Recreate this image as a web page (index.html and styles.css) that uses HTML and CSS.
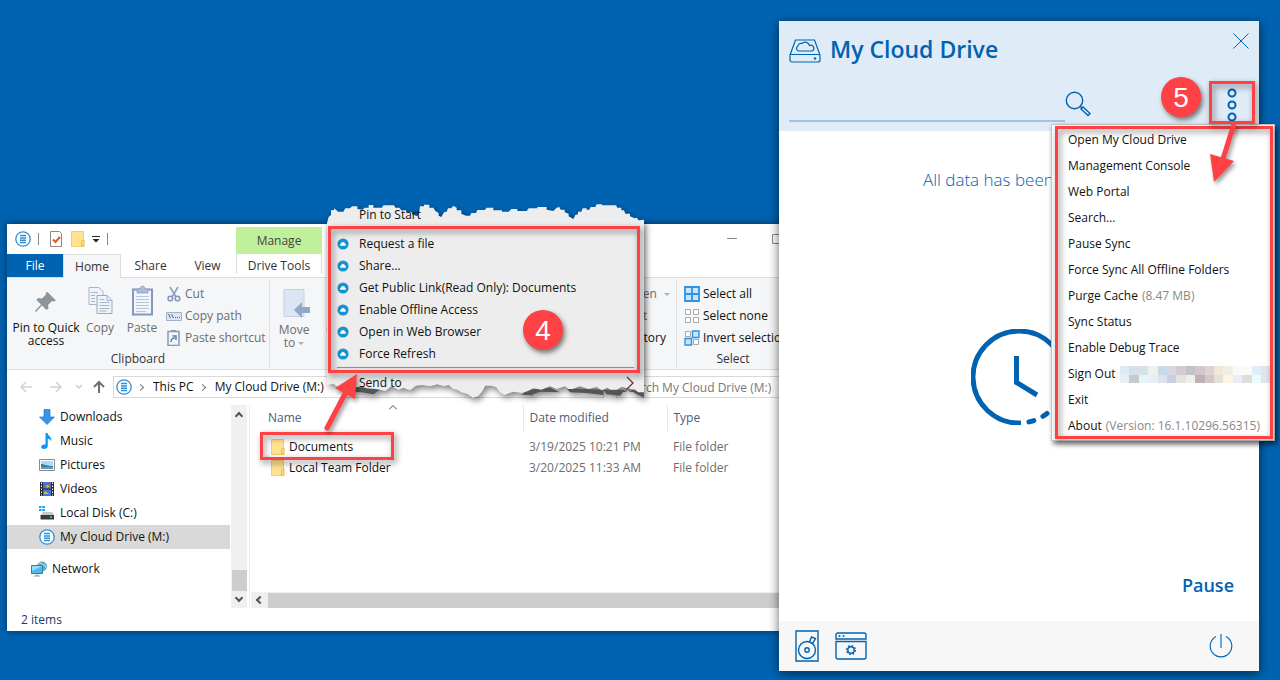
FILE: index.html
```
<!DOCTYPE html>
<html lang="en">
<head>
  <meta charset="UTF-8" />
  <meta name="viewport" content="width=device-width, initial-scale=1.0" />
  <title>My Cloud Drive</title>
  <link rel="stylesheet" href="styles.css">
</head>
<body>
  <!-- shared icons -->
  <svg class="sprites" width="0" height="0">
    <symbol id="i-drive" viewBox="0 0 16 16">
      <circle cx="8" cy="8" r="7.2" fill="#fff" stroke="#2b8fdc" stroke-width="1.3"/>
      <path d="M5 4.5h6M5 6.9h6M5 9.3h6M5 11.6h6" stroke="#2b8fdc" stroke-width="1.5"/>
    </symbol>
    <symbol id="i-cloud" viewBox="0 0 12 12">
      <circle cx="6" cy="6" r="5.6" fill="#1593d2"/>
      <path d="M3.600 7.800a1.200 1.200 0 0 1 .2-2.100 2.300 2.300 0 0 1 4.400 0 1.200 1.200 0 0 1 .2 2.100z" fill="#fff"/>
    </symbol>
    <symbol id="i-folder" viewBox="0 0 14 16">
      <path d="M.5.5h12v15H.5z" fill="#ffe391" stroke="#f0cf69"/>
      <path d="M10.5 15.5v-5l1-1.5h1.5v6.5z" fill="#ffdc77" stroke="#e8bd45"/>
    </symbol>
  </svg>

  <main class="desktop">
    <section class="explorer">
      <div class="title-bar">
        <svg class="i16"><use href="#i-drive"/></svg>
        <span class="divider"></span>
        <svg class="i16" viewBox="0 0 16 16"><path d="M2.500.5h9l2 2v13h-11z" fill="#fff" stroke="#8a8a8a"/><path d="M5 8.500l2.500 2.500L12 6" fill="none" stroke="#e8531f" stroke-width="2"/></svg>
        <svg class="i16 folder"><use href="#i-folder"/></svg>
        <svg class="more" viewBox="0 0 8 8"><path d="M0 1.500h8" stroke="#222"/><path d="M.5 4h7L4 7.500z" fill="#222"/></svg>
        <span class="divider"></span>
        <span class="manage">Manage</span>
        <svg class="win-controls" viewBox="0 0 60 14"><path d="M0 6.500h10M45.500 2.500h9v9h-9z" fill="none" stroke="#888"/></svg>
      </div>
      <nav class="tabs">
        <button class="tab file">File</button>
        <button class="tab active">Home</button>
        <button class="tab">Share</button>
        <button class="tab">View</button>
        <button class="tab tools">Drive Tools</button>
      </nav>

      <div class="ribbon">
        <div class="group clipboard">
          <div class="tools-row">
            <button class="big pin">
              <svg viewBox="0 0 32 32"><path d="M17.500 7l8.500 8.500-2.500 1-1.500-.5-4 4 .5 3.500-2 1.500-4.500-4.500L6 27l-1-1 6-6.500-4.500-4.500L8 13l4 .5 4-4-.5-1.500z" fill="#8c959c"/></svg>
              <span>Pin to Quick<br>access</span>
            </button>
            <button class="big dim">
              <svg viewBox="0 0 32 32"><path d="M5 2.500h10l4 4v13H5z" fill="#eff3fa" stroke="#a6b5cd"/><path d="M13 10.500h10l5 5v13H13z" fill="#eff3fa" stroke="#98a9c6"/><path d="M23 10.500v5h5M7 7.500h7M7 10.500h4M7 13.500h4M7 16.500h4M15.500 17.500h10M15.500 20.500h10M15.500 23.500h10M15.500 26h7M15.500 14.500h5" fill="none" stroke="#a6b5cd"/></svg>
              Copy
            </button>
            <button class="big dim">
              <svg viewBox="0 0 32 32"><path d="M7 4.500h19v25H7z" fill="#f2f5fb" stroke="#8499bd" stroke-width="2"/><path d="M11 4h3c0-4 5-4 5 0h3v4H11z" fill="#aebdd4" stroke="#8499bd" stroke-width=".7"/><path d="M10 11.500h13M10 14.500h13M10 17.500h13M10 20.500h13M10 23.500h13M10 26.500h10" stroke="#b9c5d9"/></svg>
              Paste
            </button>
            <ul class="small-tools dim">
              <li><button><svg class="i16" viewBox="0 0 16 16"><path d="M4 1l6 10M12 1L6 11" stroke="#909fb7" stroke-width="1.600" fill="none"/><circle cx="4.300" cy="12.500" r="2.300" fill="none" stroke="#8095bd" stroke-width="1.500"/><circle cx="11.500" cy="12.500" r="2.300" fill="none" stroke="#8095bd" stroke-width="1.500"/></svg>Cut</button></li>
              <li><button><svg class="i16" viewBox="0 0 16 16"><path d="M.5 4.500h15v8H.5z" fill="#dce4f2" stroke="#a2b2cc"/><path d="M2.500 6l2 4M5.500 6l2 4M9 9.500h1M11 9.500h1M13 9.500h1" stroke="#50658c"/></svg>Copy path</button></li>
              <li><button><svg class="i16" viewBox="0 0 16 16"><path d="M2 1.500h11v14H2z" fill="#f2f5fb" stroke="#8499bd" stroke-width="1.500"/><path d="M5 1h5" stroke="#8499bd" stroke-width="2"/><path d="M5 12c0-3 1-4 4-4M6.500 6H10v4" fill="none" stroke="#687fa9" stroke-width="1.500"/></svg>Paste shortcut</button></li>
            </ul>
          </div>
          <p class="group-name">Clipboard</p>
        </div>
        <div class="group organize">
          <div class="tools-row">
            <button class="big dim">
              <svg viewBox="0 0 32 32"><path d="M6 2.500h20v27H6z" fill="#dbe5f4" stroke="#c4d1e5"/><path d="M16 23l8-8v5h8v6h-8v5z" fill="#93a7c9"/></svg>
              Move to <i class="arrow"></i>
            </button>
            <button class="big dim">
              <svg viewBox="0 0 32 32"><path d="M6 2.500h20v27H6z" fill="#dbe5f4" stroke="#c4d1e5"/></svg>
              Copy to
            </button>
          </div>
        </div>
        <div class="group open">
          <ul class="small-tools">
            <li class="dim"><button>Open <i class="arrow"></i></button></li>
            <li class="dim"><button>Edit</button></li>
            <li><button>History</button></li>
          </ul>
        </div>
        <div class="group select">
          <ul class="small-tools">
            <li><button><svg class="i16" viewBox="0 0 16 16"><path d="M1 1h14v14H1zM8 1v14M1 8h14" fill="#c5e5fc" stroke="#2d93e4" stroke-width="1.800"/></svg>Select all</button></li>
            <li><button><svg class="i16" viewBox="0 0 16 16"><path d="M1.500 1.500h5v5h-5zM9.500 1.500h5v5h-5zM1.500 9.500h5v5h-5zM9.500 9.500h5v5h-5z" fill="#fff" stroke="#a8a8a8"/></svg>Select none</button></li>
            <li><button><svg class="i16" viewBox="0 0 16 16"><path d="M1.500 1.500h5v5h-5zM9.500 9.500h5v5h-5z" fill="#fff" stroke="#a8a8a8"/><path d="M8.500 1h6.500v6.500H8.500zM1 8.500h6.500V15H1z" fill="#c5e5fc" stroke="#2d93e4" stroke-width="1.400"/></svg>Invert selection</button></li>
          </ul>
          <p class="group-name">Select</p>
        </div>
      </div>

      <div class="address-row">
        <svg class="nav-arrows" viewBox="0 0 92 16"><g fill="none" stroke-width="1.500"><path d="M13 8H2M7 3L2 8l5 5M31 8h11M37 3l5 5-5 5" stroke="#d3d3d3"/><path d="M57 6l3 3 3-3" stroke="#ccc"/><path d="M80 14V3M75 8l5-5 5 5" stroke="#707070" stroke-width="2"/></g></svg>
        <div class="address">
          <svg class="i16"><use href="#i-drive"/></svg>
          <span class="chev"></span><a href="#">This PC</a>
          <span class="chev"></span><a href="#">My Cloud Drive (M:)</a>
        </div>
        <input class="search" type="text" aria-label="Search My Cloud Drive" placeholder="Search My Cloud Drive (M:)">
      </div>

      <div class="panes">
        <ul class="tree">
          <li><svg class="i16" viewBox="0 0 16 16"><path d="M5 .5h6V8h4.500L8 15.500.5 8H5z" fill="#3596e9" stroke="#2475bf" stroke-width=".7"/></svg>Downloads</li>
          <li><svg class="i16" viewBox="0 0 16 16"><path d="M6.500 0h2c.5 3 4.500 3.500 3.800 8.500-.7-2-2-2.800-3.500-2.800V13c0 2-1.800 3-3.600 3C1 16 1.500 11.500 5 11.500h1.500z" fill="#0b98f5"/></svg>Music</li>
          <li><svg class="i16" viewBox="0 0 16 16"><path d="M.5 2.500h15v11H.5z" fill="#fff" stroke="#8a8a8a"/><path d="M2 4h12v8H2z" fill="#a9dcf7"/><path d="M2 7c4 0 5 2 12 2v3H2z" fill="#477e8e"/><path d="M2 10h12v2H2z" fill="#5b9fc8"/></svg>Pictures</li>
          <li><svg class="i16" viewBox="0 0 16 16"><path d="M1 1h14v14H1z" fill="#2b2b2b"/><path d="M4 1h8v6.500H4z" fill="#4a73d1"/><path d="M4 8.500h8V15H4z" fill="#4a73d1"/><path d="M7 4l4 1-3 2zM6 10l4 3H5z" fill="#efc01e"/><path d="M8 3h3v1H8zM8 10h3v1H8z" fill="#d54a22"/><path d="M2.500 1.500v13M13.500 1.500v13" stroke="#fff" stroke-dasharray="1.500 1.500"/></svg>Videos</li>
          <li><svg class="i16" viewBox="0 0 16 16"><path d="M0 1h2.500v2H0zM3.300 1H6v2H3.300zM0 4h2.500v2H0zM3.300 4H6v2H3.300z" fill="#14a7ec"/><path d="M4 7h9l2 3H2z" fill="#c9c9c9"/><path d="M1.500 10h13.500v4.500H1.500z" fill="#3c3c3c"/><path d="M11 12h2" stroke="#50e04b" stroke-width="1.500"/></svg>Local Disk (C:)</li>
          <li class="current"><svg class="i16"><use href="#i-drive"/></svg>My Cloud Drive (M:)</li>
          <li class="network"><svg class="i16" viewBox="0 0 16 16"><circle cx="11" cy="5.500" r="5" fill="#6ba8c2"/><path d="M8 2c3 0 3 2 5 2s1 3 2.500 3" stroke="#c9e4ea" fill="none"/><path d="M.5 4.500h11v8H.5z" fill="#51b9ee" stroke="#2b7fb0"/><path d="M1 5h10L1 10z" fill="#9addfa"/><path d="M3 15h6M6 13v2" stroke="#8398a5"/></svg>Network</li>
        </ul>
        <div class="v-scroll"><i class="up"></i><b></b><i class="down"></i></div>
        <div class="files">
          <table>
            <thead>
              <tr><th class="name">Name<svg class="sort" viewBox="0 0 8 5"><path d="M0 4.500L4 .5l4 4" fill="none" stroke="#555"/></svg></th><th class="date">Date modified</th><th>Type</th></tr>
            </thead>
            <tbody>
              <tr><td><svg class="i16 folder"><use href="#i-folder"/></svg>Documents</td><td>3/19/2025 10:21 PM</td><td>File folder</td></tr>
              <tr><td><svg class="i16 folder"><use href="#i-folder"/></svg>Local Team Folder</td><td>3/20/2025 11:33 AM</td><td>File folder</td></tr>
            </tbody>
          </table>
          <div class="h-scroll"><i></i><b></b></div>
        </div>
      </div>
      <footer class="status">2 items</footer>

      <!-- torn context menu -->
      <div class="context">
        <svg class="paper" viewBox="21 24 951 600">
          <path d="M95 574L180 584 160 598 125 592 105 590zM530 568L620 578 640 604 600 588 560 584zM605 600L625 584 690 578 720 592 660 590 640 598zM740 580L850 584 850 600 800 594 750 592zM850 584L915 584 900 602 860 598zM930 584L972 580V608L950 598z" fill="#555"/>
          <path d="M21 84L26 66 33 60V46L42 45V40L55 50H70L76 40H90L96 34H112V42L128 44 134 38H146V30H160V38H186L190 31H222L226 38H238L244 46H258V52H276V58L292 64 298 48 300 34H312V29H328V38H340L346 48 356 54V62L364 66 372 52 380 50 384 40H394L400 32 410 38V46H424V56L438 62H450L454 54H468L472 45H494L500 38H520V46H546V50H566L574 42H592V48H620L626 40H652V36H680V44L700 48 710 38 718 36 722 44H734V52L746 56V64L760 72 766 60 774 58V50H784L788 40H800V44H808L812 36H826L830 28H846V31H888L892 38H904V46H912L916 56H930V64L944 70 950 68 956 76 972 74V592L955 592 945 584 920 580 905 576 890 584H872L862 578 845 586 830 576 806 582 780 574 758 582H745L735 574 710 582 690 574 664 584 640 580 624 588 606 594 580 590 552 600 540 592 528 576 512 572 496 572 486 590 474 604 458 608 444 598 424 592 412 584 400 582 386 570 372 574 352 568 330 574 306 570 288 572 270 586 250 578 236 584 214 574 196 588 170 582 140 580 126 574 100 578 80 570 56 578 40 566 21 570z" fill="#ededed"/>
        </svg>
        <ul>
          <li class="last-line">Pin to Start</li>
          <li><svg class="i12"><use href="#i-cloud"/></svg>Request a file</li>
          <li><svg class="i12"><use href="#i-cloud"/></svg>Share...</li>
          <li><svg class="i12"><use href="#i-cloud"/></svg>Get Public Link(Read Only): Documents</li>
          <li><svg class="i12"><use href="#i-cloud"/></svg>Enable Offline Access</li>
          <li><svg class="i12"><use href="#i-cloud"/></svg>Open in Web Browser</li>
          <li class="last-line"><svg class="i12"><use href="#i-cloud"/></svg>Force Refresh</li>
          <li>Send to<svg class="submenu" viewBox="0 0 8 14"><path d="M1 1l6 6-6 6" fill="none" stroke="#6b3535" stroke-width="1.300"/></svg></li>
        </ul>
        <div class="mark mark-context"></div>
        <span class="badge badge-4">4</span>
      </div>
      <div class="mark mark-file"></div>
      <svg class="pointer pointer-file" viewBox="0 0 44 64"><path d="M7 56L27 18" stroke="#fd4144" stroke-width="5" stroke-linecap="round"/><path d="M37 2L15 16l20 11z" fill="#fd4144"/></svg>
    </section>

    <section class="cloud">
      <header>
        <div class="brand">
          <svg viewBox="0 0 32 24"><g fill="none" stroke="#0063b1" stroke-width="1.200"><path d="M1 16L6.500 1h19L31 16v5a2 2 0 0 1-2 2H3a2 2 0 0 1-2-2zM1 15.500h30"/><path d="M9.500 12a2.700 2.700 0 0 1-.5-5 3 3 0 0 1 4-2.500 4.500 4.500 0 0 1 7.500 2 3 3 0 0 1 2.500 5.500z"/></g><circle cx="26" cy="19.500" r="1.200" fill="#0063b1"/></svg>
          <h1>My Cloud Drive</h1>
          <button class="close" aria-label="Close"><svg viewBox="0 0 16 16"><path d="M.5.5l15 15M15.500.5l-15 15" stroke="#0063b1"/></svg></button>
        </div>
        <div class="find">
          <input type="text" aria-label="Search">
          <button aria-label="Search"><svg viewBox="0 0 26 26"><g fill="none" stroke="#0063b1" stroke-width="1.400"><circle cx="9.500" cy="9.500" r="8.200"/><path d="M15 15l2 2"/><path d="M16 18l2-2 7 6.500-2 2z"/></g></svg></button>
          <button class="dots" aria-label="Menu"><svg viewBox="0 0 12 34"><g fill="none" stroke="#0063b1" stroke-width="2"><circle cx="6" cy="5" r="3.500"/><circle cx="6" cy="17" r="3.500"/><circle cx="6" cy="29" r="3.500"/></g></svg></button>
        </div>
      </header>
      <div class="state">
        <p>All data has been</p>
        <svg class="clock" viewBox="0 0 96 96"><g fill="none" stroke="#0063b1" stroke-width="5"><path d="M50 94A46 46 0 1 1 94 48"/><path d="M58 92.900A46 46 0 0 0 94 48" stroke-linecap="round" stroke-dasharray="5 10"/><path d="M45.500 27v26.500L66 66"/></g></svg>
        <button class="pause">Pause</button>
      </div>
      <footer>
        <button aria-label="Drive"><svg viewBox="0 0 24 32"><g fill="none" stroke="#0063b1" stroke-width="1.400"><path d="M1 1h22v30H1z"/><circle cx="12" cy="20" r="8.500"/><circle cx="12" cy="20" r="2.200"/><path d="M14.500 12l2-5 4 1.500-3 5z" fill="#f7f7f7"/></g></svg></button>
        <button aria-label="Settings"><svg class="wide" viewBox="0 0 32 28"><g fill="none" stroke="#0063b1" stroke-width="1.400"><path d="M1 7V3a2 2 0 0 1 2-2h26a2 2 0 0 1 2 2v4zM1 9.500h30V25a2 2 0 0 1-2 2H3a2 2 0 0 1-2-2z"/><circle cx="16" cy="18" r="3.200"/><circle cx="16" cy="18" r="4.400" stroke-dasharray="1.700 1.750"/></g><circle cx="4.500" cy="4" r="1" fill="#0063b1"/><circle cx="8.500" cy="4" r="1" fill="#0063b1"/></svg></button>
        <button class="power" aria-label="Power"><svg viewBox="0 0 24 24"><path d="M7 2.500a10.800 10.800 0 1 0 10 0M12 0v14" fill="none" stroke="#0063b1" stroke-width="1.100"/></svg></button>
      </footer>

      <div class="menu">
        <button>Open My Cloud Drive</button>
        <button>Management Console</button>
        <button>Web Portal</button>
        <button>Search...</button>
        <button>Pause Sync</button>
        <button>Force Sync All Offline Folders</button>
        <button>Purge Cache <small>(8.47 MB)</small></button>
        <button>Sync Status</button>
        <button>Enable Debug Trace</button>
        <button class="account">Sign Out
          <svg class="masked" viewBox="0 0 16 2" preserveAspectRatio="none" shape-rendering="crispEdges">
            <path d="M0 0h1v1H0zM13 1h1v1h-1z" fill="#dcebf4"/><path d="M1 0h2v1H1z" fill="#d5e0e8"/><path d="M3 0h1v1H3z" fill="#edf2ed"/><path d="M4 0h1v1H4z" fill="#c9d9ea"/><path d="M5 0h1v1H5z" fill="#d6d7e1"/><path d="M6 0h1v1H6z" fill="#d4cbd0"/><path d="M7 0h1v1H7z" fill="#c5c1cb"/><path d="M8 0h1v1H8zM9 1h1v1H9z" fill="#d4c6c9"/><path d="M9 0h1v1H9z" fill="#dfd2d4"/><path d="M10 0h1v1h-1z" fill="#f2e6d8"/><path d="M11 0h1v1h-1z" fill="#f1eee4"/><path d="M12 0h2v1h-2z" fill="#fafaf7"/><path d="M14 0h1v1h-1z" fill="#dfeefa"/><path d="M15 0h1v2h-1z" fill="#e2e5ee"/>
            <path d="M0 1h1v1H0zM3 1h1v1H3zM12 1h1v1h-1z" fill="#e8edf6"/><path d="M1 1h1v1H1z" fill="#c6cbce"/><path d="M2 1h1v1H2z" fill="#e7f4fa"/><path d="M4 1h1v1H4z" fill="#dee3ef"/><path d="M5 1h1v1H5z" fill="#cccfe2"/><path d="M6 1h1v1H6z" fill="#e5e2e4"/><path d="M7 1h1v1H7z" fill="#eff0eb"/><path d="M8 1h1v1H8z" fill="#bdb3b6"/><path d="M10 1h1v1h-1z" fill="#e7dfda"/><path d="M11 1h1v1h-1z" fill="#fcf4e7"/><path d="M13 1h1v1h-1z" fill="#dddfda"/><path d="M14 1h1v1h-1z" fill="#effaff"/>
          </svg>
        </button>
        <button>Exit</button>
        <button>About <small>(Version: 16.1.10296.56315)</small></button>
        <div class="mark mark-menu"></div>
      </div>
      <div class="mark mark-dots"></div>
      <span class="badge badge-5">5</span>
      <svg class="pointer pointer-menu" viewBox="0 0 40 70"><path d="M28 4L16 42" stroke="#fd4144" stroke-width="5"/><path d="M8 62L4 34l24 7z" fill="#fd4144"/></svg>
    </section>
  </main>
</body>
</html>
```
FILE: styles.css
```
* {
  box-sizing: border-box;
}
body {
  margin: 0;
  font-family: "Open Sans", "Noto Sans", sans-serif;
  font-size: 12px;
  line-height: 14px;
  color: #111;
  background: #0063b1;
  overflow: hidden;
}
button {
  font: inherit;
  color: inherit;
  background: none;
  border: none;
  padding: 0;
  cursor: pointer;
}
ul, p, h1 {
  margin: 0;
  padding: 0;
  list-style: none;
}
svg {
  display: block;
  flex-shrink: 0;
}
.sprites {
  position: absolute;
}
.i16 {
  width: 16px;
  height: 16px;
}
.i12 {
  width: 12px;
  height: 12px;
}
.desktop {
  min-height: 100vh;
  display: grid;
  grid-template-columns: minmax(0, 1fr) 480px;
  padding: 21px 21px 9px 7px;
}

/* explorer window, runs on under the cloud window */
.explorer {
  position: relative;
  align-self: end;
  margin: 0 -60px 40px 0;
  background: #fff;
  box-shadow: 0 0 8px rgba(0, 0, 0, 0.5);
}
.title-bar {
  display: flex;
  align-items: center;
  height: 30px;
  padding-left: 8px;
  gap: 9px;
}
.title-bar .divider {
  width: 1px;
  height: 12px;
  margin-left: -2px;
  background: #888;
}
.title-bar .folder {
  margin-left: -3px;
}
.more {
  width: 8px;
  height: 8px;
  margin-left: -3px;
}
.manage {
  align-self: flex-end;
  width: 86px;
  height: 27px;
  margin: 0 396px 0 119px;
  line-height: 28px;
  text-align: center;
  color: #444;
  background: #c1f09b;
}
.win-controls {
  width: 60px;
  height: 14px;
}
.tabs {
  display: flex;
  height: 24px;
  border-bottom: 1px solid #dcdddf;
}
.tab {
  width: 57px;
  height: 24px;
  color: #333;
}
.tab.file {
  width: 56px;
  height: 23px;
  color: #fff;
  background: #0063b1;
}
.tab.active {
  width: 58px;
  margin-right: 1px;
  background: #f5f6f7;
  border: 1px solid #dcdddf;
  border-bottom: none;
}
.tab.tools {
  width: 86px;
  height: 20px;
  padding-top: 4px;
  border: solid #dcdddf;
  border-width: 0 1px;
}
.ribbon {
  display: flex;
  height: 92px;
  padding: 3px 0 2px;
  background: #f5f6f7;
  border-bottom: 1px solid #dcdddf;
}
.group {
  display: flex;
  flex-direction: column;
  flex-shrink: 0;
  border-right: 1px solid #dfe0e2;
}
.tools-row {
  display: flex;
  height: 69px;
}
.group-name {
  margin-top: auto;
  padding-bottom: 1px;
  text-align: center;
  color: #333;
}
.clipboard {
  width: 263px;
}
.organize {
  width: 330px;
  padding-left: 3px;
  border: none;
}
.open {
  width: 77px;
  padding-left: 26px;
}
.select {
  width: 114px;
  padding-left: 7px;
}
.select .group-name {
  padding-right: 8px;
}
.big {
  display: flex;
  flex-direction: column;
  align-items: center;
  width: 42px;
  padding-top: 4px;
  line-height: 13px;
}
.big svg {
  width: 32px;
  height: 32px;
  margin-bottom: 4px;
}
.big.pin {
  width: 72px;
  padding-left: 6px;
  white-space: nowrap;
}
.organize .big {
  display: block;
  margin-right: 4px;
}
.organize .big svg {
  margin: 0 auto 4px;
}
.dim {
  color: #6d6d6d;
}
.arrow {
  display: inline-block;
  vertical-align: middle;
  border: 3px solid transparent;
  border-top-color: #b0b0b0;
  border-bottom: none;
}
.small-tools {
  padding-top: 2px;
}
.small-tools button {
  display: flex;
  align-items: center;
  gap: 3px;
  height: 22px;
  white-space: nowrap;
}
.clipboard .small-tools {
  padding-left: 3px;
}
.open .arrow {
  margin-left: 4px;
}
.address-row {
  display: flex;
  align-items: center;
  height: 35px;
  padding: 0 9px 1px 12px;
}
.nav-arrows {
  width: 92px;
  height: 16px;
}
.address {
  flex: 1;
  display: flex;
  align-items: center;
  height: 22px;
  padding-left: 2px;
  margin-left: 2px;
  border: 1px solid #d9d9d9;
}
.address a {
  color: #111;
  text-decoration: none;
}
.chev {
  width: 5px;
  height: 5px;
  margin: 0 10px 0 6px;
  border: solid #777;
  border-width: 1px 1px 0 0;
  transform: rotate(45deg);
}
.search {
  width: 214px;
  height: 22px;
  margin-left: 12px;
  padding: 0 4px;
  font: inherit;
  border: 1px solid #d9d9d9;
}
.search::placeholder {
  color: #777;
}
.panes {
  display: flex;
  height: 203px;
}
.tree {
  width: 223px;
}
.tree li {
  display: flex;
  align-items: center;
  gap: 5px;
  height: 24px;
  padding-left: 32px;
}
.tree .current {
  background: #d9d9d9;
}
.tree .network {
  margin-top: 8px;
  padding-left: 24px;
}
.v-scroll {
  display: flex;
  flex-direction: column;
  align-items: center;
  width: 16px;
  margin: 0 2px 0 1px;
  padding: 6px 0 4px;
  background: #f0f0f0;
}
.v-scroll i, .h-scroll i {
  width: 6px;
  height: 6px;
  border: solid #555;
  border-width: 2px 0 0 2px;
  transform: rotate(45deg);
}
.v-scroll .up {
  margin: 2px 0 auto;
}
.v-scroll .down {
  margin: 4px 0 3px;
  transform: rotate(225deg);
}
.v-scroll b {
  width: 15px;
  height: 21px;
  background: #cdcdcd;
}
.files {
  flex: 1;
  display: flex;
  flex-direction: column;
  justify-content: space-between;
  border-left: 1px solid #eee;
}
table {
  width: 100%;
  table-layout: fixed;
  border-collapse: collapse;
}
th {
  height: 26px;
  padding: 0 6px;
  text-align: left;
  font-weight: normal;
  color: #4c607a;
  border-right: 1px solid #e5e5e5;
}
th.name {
  position: relative;
  width: 273px;
  padding-left: 18px;
}
th.date {
  width: 144px;
}
.sort {
  position: absolute;
  top: 0;
  left: 51%;
  width: 8px;
  height: 5px;
}
td {
  height: 21px;
  padding: 0 6px;
  color: #6d6d6d;
}
td:first-child {
  display: flex;
  align-items: center;
  gap: 3px;
  padding-left: 20px;
  color: #111;
}
tbody::before {
  content: "";
  display: block;
  height: 5px;
}
.h-scroll {
  display: flex;
  align-items: center;
  height: 16px;
  margin-left: 1px;
  background: #f0f0f0;
}
.h-scroll i {
  margin: 0 5px 0 6px;
  transform: rotate(-45deg);
}
.h-scroll b {
  flex: 1;
  height: 15px;
  background: #cdcdcd;
}
.status {
  height: 23px;
  padding: 5px 14px;
  color: #1e3a66;
}

.context {
  position: absolute;
  top: -21px;
  left: 320px;
  width: 317px;
}
.paper {
  position: absolute;
  width: 317px;
  height: 200px;
  filter: drop-shadow(2px 3px 3px rgba(0, 0, 0, 0.5));
}
.context ul {
  position: relative;
  padding-top: 1px;
}
.context li {
  display: flex;
  align-items: center;
  height: 22px;
  margin: 0 10px;
  padding-left: 22px;
}
.context .i12 {
  margin: 0 10px 0 -22px;
}
.context .last-line {
  height: 25px;
  padding-bottom: 3px;
  margin-bottom: 4px;
  border-bottom: 1px solid #909090;
}
.submenu {
  width: 8px;
  height: 14px;
  margin-left: auto;
}

/* call-outs */
.mark {
  position: absolute;
  border: 3px solid #fd4144;
  filter: drop-shadow(2px 3px 3px rgba(0, 0, 0, 0.5));
  pointer-events: none;
}
.badge {
  position: absolute;
  width: 40px;
  height: 40px;
  border-radius: 50%;
  background: #fd4144;
  box-shadow: 2px 3px 5px rgba(0, 0, 0, 0.5);
  color: #fff;
  font: 28px/42px "Liberation Sans", Arial, sans-serif;
  text-align: center;
}
.pointer {
  position: absolute;
  filter: drop-shadow(2px 3px 2px rgba(0, 0, 0, 0.4));
}
.mark-context {
  top: 23px;
  left: 1px;
  width: 312px;
  height: 147px;
}
.badge-4 {
  top: 107px;
  left: 196px;
}
.mark-file {
  top: 208px;
  left: 253px;
  width: 134px;
  height: 28px;
}
.pointer-file {
  top: 148px;
  left: 313px;
  width: 44px;
  height: 64px;
}

/* cloud window */
.cloud {
  position: relative;
  display: flex;
  flex-direction: column;
  background: #fff;
  box-shadow: 0 2px 10px rgba(0, 0, 0, 0.6);
  color: #0063b1;
}
.cloud header {
  height: 110px;
  padding: 12px 10px 0;
  background: #dfebf6;
}
.brand {
  display: flex;
  align-items: center;
  gap: 9px;
}
.brand > svg {
  width: 32px;
  height: 24px;
  margin-top: 4px;
}
.brand h1 {
  font-size: 23px;
  line-height: 32px;
  font-weight: 600;
}
.close {
  margin: -16px 0 0 auto;
}
.close svg {
  width: 16px;
  height: 16px;
}
.find {
  display: flex;
  align-items: center;
  margin-top: 21px;
}
.find input {
  width: 276px;
  height: 36px;
  background: none;
  border: none;
  border-bottom: 2px solid #a0c3e2;
}
.find button svg {
  width: 26px;
  height: 26px;
}
.find .dots {
  margin: 2px 11px 0 auto;
}
.find .dots svg {
  width: 12px;
  height: 34px;
}
.state {
  flex: 1;
  display: flex;
  flex-direction: column;
  align-items: center;
  padding: 36px 25px 22px;
}
.state p {
  align-self: flex-start;
  padding-left: 119px;
  font-size: 17px;
  line-height: 26px;
  font-weight: 300;
}
.clock {
  width: 96px;
  height: 96px;
  margin-top: 136px;
}
.pause {
  margin-top: auto;
  align-self: flex-end;
  font-size: 18px;
  line-height: 28px;
  font-weight: 600;
}
.cloud footer {
  display: flex;
  align-items: center;
  gap: 16px;
  height: 50px;
  padding: 0 26px 1px 16px;
  background: #f7f7f7;
}
.cloud footer svg {
  width: 24px;
  height: 32px;
}
.cloud footer .wide {
  width: 32px;
  height: 28px;
}
.power {
  margin-left: auto;
}
.menu {
  position: absolute;
  top: 103px;
  right: -16px;
  width: 224px;
  padding: 2px 4px 1px 16px;
  background: #fff;
  border: 1px solid #c8c8c8;
  box-shadow: 2px 3px 5px rgba(0, 0, 0, 0.5);
  color: #111;
}
.menu button {
  display: flex;
  align-items: center;
  gap: 4px;
  width: 100%;
  height: 26px;
  white-space: nowrap;
}
.menu small {
  font-size: 12px;
  color: #888;
}
.masked {
  flex: 1;
  height: 17px;
}
.mark-menu {
  top: 1px;
  left: 3px;
  right: 1px;
  bottom: 1px;
}
.mark-dots {
  top: 60px;
  right: 4px;
  width: 46px;
  height: 43px;
}
.badge-5 {
  top: 56px;
  right: 58px;
}
.pointer-menu {
  top: 99px;
  right: 13px;
  width: 40px;
  height: 70px;
}
```
